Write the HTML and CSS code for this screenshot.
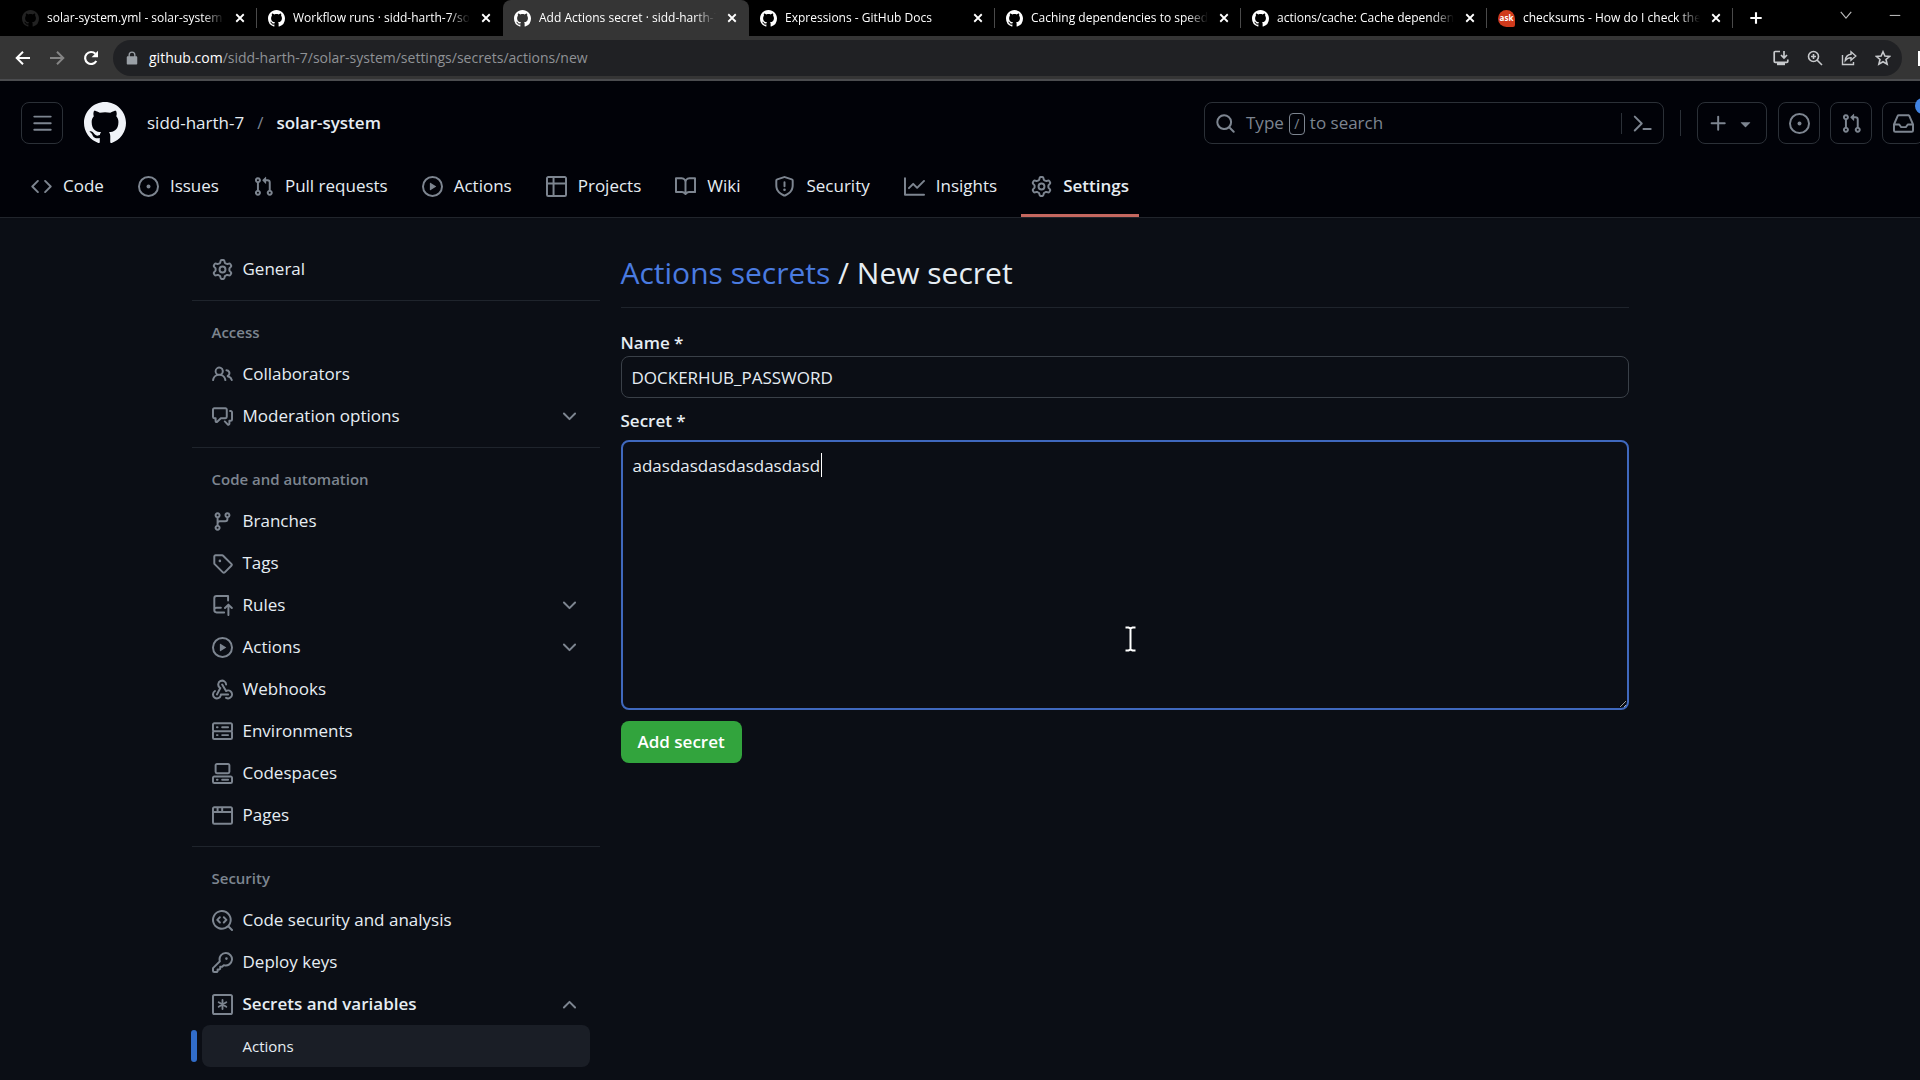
FILE: index.html
```html
<!DOCTYPE html>
<html lang="en">
<head>
    <meta charset="UTF-8">
    <meta name="viewport" content="width=device-width, initial-scale=1.0">
    <title>Add Actions secret · sidd-harth-7/solar-system</title>
    <link rel="stylesheet" href="styles.css">
</head>
<body>
    <!-- icon sprite -->
    <svg class="sprite" aria-hidden="true">
        <symbol id="i-bars" viewBox="0 0 16 16"><path d="M1 2.75A.75.75 0 0 1 1.75 2h12.5a.75.75 0 0 1 0 1.5H1.75A.75.75 0 0 1 1 2.75Zm0 5A.75.75 0 0 1 1.75 7h12.5a.75.75 0 0 1 0 1.5H1.75A.75.75 0 0 1 1 7.75ZM1.75 12h12.5a.75.75 0 0 1 0 1.5H1.75a.75.75 0 0 1 0-1.5Z"/></symbol>
        <symbol id="i-github" viewBox="0 0 16 16"><path d="M8 0c4.42 0 8 3.58 8 8a8.013 8.013 0 0 1-5.45 7.59c-.4.08-.55-.17-.55-.38 0-.27.01-1.13.01-2.2 0-.75-.25-1.23-.54-1.48 1.78-.2 3.65-.88 3.65-3.95 0-.88-.31-1.59-.82-2.15.08-.2.36-1.02-.08-2.12 0 0-.67-.22-2.2.82-.64-.18-1.32-.27-2-.27-.68 0-1.36.09-2 .27-1.53-1.03-2.2-.82-2.2-.82-.44 1.1-.16 1.92-.08 2.12-.51.56-.82 1.28-.82 2.15 0 3.06 1.86 3.75 3.64 3.95-.23.2-.44.55-.51 1.07-.46.21-1.61.55-2.33-.66-.15-.24-.6-.83-1.23-.82-.67.01-.27.38.01.53.34.19.73.9.82 1.13.16.45.68 1.31 2.69.94 0 .67.01 1.3.01 1.49 0 .21-.15.45-.55.38A7.995 7.995 0 0 1 0 8c0-4.42 3.58-8 8-8Z"/></symbol>
        <symbol id="i-code" viewBox="0 0 16 16"><path d="m11.28 3.22 4.25 4.25a.75.75 0 0 1 0 1.06l-4.25 4.25a.749.749 0 0 1-1.275-.326.749.749 0 0 1 .215-.734L13.94 8l-3.72-3.72a.749.749 0 0 1 .326-1.275.749.749 0 0 1 .734.215Zm-6.56 0a.751.751 0 0 1 1.042.018.751.751 0 0 1 .018 1.042L2.06 8l3.72 3.72a.749.749 0 0 1-.326 1.275.749.749 0 0 1-.734-.215L.47 8.53a.75.75 0 0 1 0-1.06Z"/></symbol>
        <symbol id="i-issue" viewBox="0 0 16 16"><path d="M8 9.5a1.5 1.5 0 1 0 0-3 1.5 1.5 0 0 0 0 3Z"/><path d="M8 0a8 8 0 1 1 0 16A8 8 0 0 1 8 0ZM1.5 8a6.5 6.5 0 1 0 13 0 6.5 6.5 0 0 0-13 0Z"/></symbol>
        <symbol id="i-pull" viewBox="0 0 16 16"><path d="M1.5 3.25a2.25 2.25 0 1 1 3 2.122v5.256a2.251 2.251 0 1 1-1.5 0V5.372A2.25 2.25 0 0 1 1.5 3.25Zm5.677-.177L9.573.677A.25.25 0 0 1 10 .854V2.5h1A2.5 2.5 0 0 1 13.5 5v5.628a2.251 2.251 0 1 1-1.5 0V5a1 1 0 0 0-1-1h-1v1.646a.25.25 0 0 1-.427.177L7.177 3.427a.25.25 0 0 1 0-.354ZM3.75 2.5a.75.75 0 1 0 0 1.5.75.75 0 0 0 0-1.5Zm0 9.5a.75.75 0 1 0 0 1.5.75.75 0 0 0 0-1.5Zm8.25.75a.75.75 0 1 0 1.5 0 .75.75 0 0 0-1.5 0Z"/></symbol>
        <symbol id="i-play" viewBox="0 0 16 16"><path d="M8 0a8 8 0 1 1 0 16A8 8 0 0 1 8 0ZM1.5 8a6.5 6.5 0 1 0 13 0 6.5 6.5 0 0 0-13 0Zm4.879-2.773 4.264 2.559a.25.25 0 0 1 0 .428l-4.264 2.559A.25.25 0 0 1 6 10.559V5.442a.25.25 0 0 1 .379-.215Z"/></symbol>
        <symbol id="i-table" viewBox="0 0 16 16"><path d="M0 1.75C0 .784.784 0 1.75 0h12.5C15.216 0 16 .784 16 1.75v12.5A1.75 1.75 0 0 1 14.25 16H1.75A1.75 1.75 0 0 1 0 14.25ZM6.5 6.5v8h7.75a.25.25 0 0 0 .25-.25V6.5Zm8-1.5V1.75a.25.25 0 0 0-.25-.25H6.5V5Zm-13 1.5v7.75c0 .138.112.25.25.25H5v-8ZM5 5V1.5H1.75a.25.25 0 0 0-.25.25V5Z"/></symbol>
        <symbol id="i-book" viewBox="0 0 16 16"><path d="M0 1.75A.75.75 0 0 1 .75 1h4.253c1.227 0 2.317.59 3 1.501A3.743 3.743 0 0 1 11.006 1h4.245a.75.75 0 0 1 .75.75v10.5a.75.75 0 0 1-.75.75h-4.507a2.25 2.25 0 0 0-1.591.659l-.622.621a.75.75 0 0 1-1.06 0l-.622-.621A2.25 2.25 0 0 0 5.258 13H.75a.75.75 0 0 1-.75-.75Zm7.251 10.324.004-5.073-.002-2.253A2.25 2.25 0 0 0 5.003 2.5H1.5v9h3.757a3.75 3.75 0 0 1 1.994.574ZM8.755 4.75l-.004 7.322a3.752 3.752 0 0 1 1.992-.572H14.5v-9h-3.495a2.25 2.25 0 0 0-2.25 2.25Z"/></symbol>
        <symbol id="i-shield" viewBox="0 0 16 16"><path d="M7.467.133a1.748 1.748 0 0 1 1.066 0l5.25 1.68A1.75 1.75 0 0 1 15 3.48V7c0 1.566-.32 3.182-1.303 4.682-.983 1.498-2.585 2.813-5.032 3.855a1.697 1.697 0 0 1-1.33 0c-2.447-1.042-4.049-2.357-5.032-3.855C1.32 10.182 1 8.566 1 7V3.48a1.75 1.75 0 0 1 1.217-1.667Zm.61 1.429a.25.25 0 0 0-.153 0l-5.25 1.68a.25.25 0 0 0-.174.238V7c0 1.358.275 2.666 1.057 3.86.784 1.194 2.121 2.34 4.366 3.297a.196.196 0 0 0 .154 0c2.245-.956 3.582-2.104 4.366-3.298C13.225 9.666 13.5 8.36 13.5 7V3.48a.251.251 0 0 0-.174-.237l-5.25-1.68ZM8.75 4.75v3a.75.75 0 0 1-1.5 0v-3a.75.75 0 0 1 1.5 0ZM9 10.5a1 1 0 1 1-2 0 1 1 0 0 1 2 0Z"/></symbol>
        <symbol id="i-graph" viewBox="0 0 16 16"><path d="M1.5 1.75V13.5h13.75a.75.75 0 0 1 0 1.5H.75a.75.75 0 0 1-.75-.75V1.75a.75.75 0 0 1 1.5 0Zm14.28 2.53-5.25 5.25a.75.75 0 0 1-1.06 0L7 7.06 4.28 9.78a.751.751 0 0 1-1.042-.018.751.751 0 0 1-.018-1.042l3.25-3.25a.75.75 0 0 1 1.06 0L10 7.94l4.72-4.72a.751.751 0 0 1 1.042.018.751.751 0 0 1 .018 1.042Z"/></symbol>
        <symbol id="i-gear" viewBox="0 0 16 16"><path d="M8 0a8.2 8.2 0 0 1 .701.031C9.444.095 9.99.645 10.16 1.29l.288 1.107c.018.066.079.158.212.224.231.114.454.243.668.386.123.082.233.09.299.071l1.103-.303c.644-.176 1.392.021 1.82.63.27.385.506.792.704 1.218.315.675.111 1.422-.364 1.891l-.814.806c-.049.048-.098.147-.088.294.016.257.016.515 0 .772-.01.147.038.246.088.294l.814.806c.475.469.679 1.216.364 1.891a7.977 7.977 0 0 1-.704 1.217c-.428.61-1.176.807-1.82.63l-1.102-.302c-.067-.019-.177-.011-.3.071a5.909 5.909 0 0 1-.668.386c-.133.066-.194.158-.211.224l-.29 1.106c-.168.646-.715 1.196-1.458 1.26a8.006 8.006 0 0 1-1.402 0c-.743-.064-1.289-.614-1.458-1.26l-.289-1.106c-.018-.066-.079-.158-.212-.224a5.738 5.738 0 0 1-.668-.386c-.123-.082-.233-.09-.299-.071l-1.103.303c-.644.176-1.392-.021-1.82-.63a8.12 8.12 0 0 1-.704-1.218c-.315-.675-.111-1.422.363-1.891l.815-.806c.05-.048.098-.147.088-.294a6.214 6.214 0 0 1 0-.772c.01-.147-.038-.246-.088-.294l-.815-.806C.635 6.045.431 5.298.746 4.623a7.92 7.92 0 0 1 .704-1.217c.428-.61 1.176-.807 1.82-.63l1.102.302c.067.019.177.011.3-.071.214-.143.437-.272.668-.386.133-.066.194-.158.211-.224l.29-1.106C6.009.645 6.556.095 7.299.03 7.53.01 7.764 0 8 0Zm-.571 1.525c-.036.003-.108.036-.137.146l-.289 1.105c-.147.561-.549.967-.998 1.189-.173.086-.34.183-.5.29-.417.278-.97.423-1.529.27l-1.103-.303c-.109-.03-.175.016-.195.045-.22.312-.412.644-.573.99-.014.031-.021.11.059.19l.815.806c.411.406.562.957.53 1.456a4.709 4.709 0 0 0 0 .582c.032.499-.119 1.05-.53 1.456l-.815.806c-.081.08-.073.159-.059.19.162.346.353.677.573.989.02.03.085.076.195.046l1.102-.303c.56-.153 1.113-.008 1.53.27.161.107.328.204.501.29.447.222.85.629.997 1.189l.289 1.105c.029.109.101.143.137.146a6.6 6.6 0 0 0 1.142 0c.036-.003.108-.036.137-.146l.289-1.105c.147-.561.549-.967.998-1.189.173-.086.34-.183.5-.29.417-.278.97-.423 1.529-.27l1.103.303c.109.029.175-.016.195-.045.22-.313.411-.644.573-.99.014-.031.021-.11-.059-.19l-.815-.806c-.411-.406-.562-.957-.53-1.456a4.709 4.709 0 0 0 0-.582c-.032-.499.119-1.05.53-1.456l.815-.806c.081-.08.073-.159.059-.19a6.464 6.464 0 0 0-.573-.989c-.02-.03-.085-.076-.195-.046l-1.102.303c-.56.153-1.113.008-1.53-.27a4.44 4.44 0 0 0-.501-.29c-.447-.222-.85-.629-.997-1.189l-.289-1.105c-.029-.11-.101-.143-.137-.146a6.6 6.6 0 0 0-1.142 0ZM11 8a3 3 0 1 1-6 0 3 3 0 0 1 6 0ZM9.5 8a1.5 1.5 0 1 0-3.001.001A1.5 1.5 0 0 0 9.5 8Z"/></symbol>
        <symbol id="i-people" viewBox="0 0 16 16"><path d="M2 5.5a3.5 3.5 0 1 1 5.898 2.549 5.508 5.508 0 0 1 3.034 4.084.75.75 0 1 1-1.482.235 4 4 0 0 0-7.9 0 .75.75 0 0 1-1.482-.236A5.507 5.507 0 0 1 3.102 8.05 3.493 3.493 0 0 1 2 5.5ZM11 4a3.001 3.001 0 0 1 2.22 5.018 5.01 5.01 0 0 1 2.56 3.012.749.749 0 0 1-.885.954.752.752 0 0 1-.549-.514 3.507 3.507 0 0 0-2.522-2.372.75.75 0 0 1-.574-.73v-.352a.75.75 0 0 1 .416-.672A1.5 1.5 0 0 0 11 5.5.75.75 0 0 1 11 4Zm-5.5-.5a2 2 0 1 0-.001 3.999A2 2 0 0 0 5.5 3.5Z"/></symbol>
        <symbol id="i-discussion" viewBox="0 0 16 16"><path d="M1.75 1h8.5c.966 0 1.75.784 1.75 1.75v5.5A1.75 1.75 0 0 1 10.25 10H7.061l-2.574 2.573A1.458 1.458 0 0 1 2 11.543V10h-.25A1.75 1.75 0 0 1 0 8.25v-5.5C0 1.784.784 1 1.75 1ZM1.5 2.75v5.5c0 .138.112.25.25.25h1a.75.75 0 0 1 .75.75v2.19l2.72-2.72a.749.749 0 0 1 .53-.22h3.5a.25.25 0 0 0 .25-.25v-5.5a.25.25 0 0 0-.25-.25h-8.5a.25.25 0 0 0-.25.25Zm13 2a.25.25 0 0 0-.25-.25h-.5a.75.75 0 0 1 0-1.5h.5c.966 0 1.75.784 1.75 1.75v5.5A1.75 1.75 0 0 1 14.25 12H14v1.543a1.458 1.458 0 0 1-2.487 1.03L9.22 12.28a.749.749 0 0 1 .326-1.275.749.749 0 0 1 .734.215l2.22 2.22v-2.19a.75.75 0 0 1 .75-.75h1a.25.25 0 0 0 .25-.25Z"/></symbol>
        <symbol id="i-branch" viewBox="0 0 16 16"><path d="M9.5 3.25a2.25 2.25 0 1 1 3 2.122V6A2.5 2.5 0 0 1 10 8.5H6a1 1 0 0 0-1 1v1.128a2.251 2.251 0 1 1-1.5 0V5.372a2.25 2.25 0 1 1 1.5 0v1.836A2.493 2.493 0 0 1 6 7h4a1 1 0 0 0 1-1v-.628A2.25 2.25 0 0 1 9.5 3.25Zm-6 0a.75.75 0 1 0 1.5 0 .75.75 0 0 0-1.5 0Zm8.25-.75a.75.75 0 1 0 0 1.5.75.75 0 0 0 0-1.5ZM4.25 12a.75.75 0 1 0 0 1.5.75.75 0 0 0 0-1.5Z"/></symbol>
        <symbol id="i-tag" viewBox="0 0 16 16"><path d="M1 7.775V2.75C1 1.784 1.784 1 2.75 1h5.025c.464 0 .91.184 1.238.513l6.25 6.25a1.75 1.75 0 0 1 0 2.474l-5.026 5.026a1.75 1.75 0 0 1-2.474 0l-6.25-6.25A1.752 1.752 0 0 1 1 7.775Zm1.5 0c0 .066.026.13.073.177l6.25 6.25a.25.25 0 0 0 .354 0l5.025-5.025a.25.25 0 0 0 0-.354l-6.25-6.25a.25.25 0 0 0-.177-.073H2.75a.25.25 0 0 0-.25.25ZM6 5a1 1 0 1 1 0 2 1 1 0 0 1 0-2Z"/></symbol>
        <symbol id="i-rules" viewBox="0 0 16 16"><path d="M1 2.5A2.5 2.5 0 0 1 3.5 0h8.75a.75.75 0 0 1 .75.75v3.5a.75.75 0 0 1-1.5 0V1.5h-8a1 1 0 0 0-1 1v6.708A2.493 2.493 0 0 1 3.5 9h3.25a.75.75 0 0 1 0 1.5H3.5a1 1 0 0 0 0 2h5.75a.75.75 0 0 1 0 1.5H3.5A2.5 2.5 0 0 1 1 11.5Z"/><path d="M12.5 15.3V8M9.9 9.9l2.6-2.6 2.6 2.6" fill="none" stroke="currentColor" stroke-width="1.5" stroke-linecap="round" stroke-linejoin="round"/></symbol>
        <symbol id="i-webhook" viewBox="0 0 16 16"><path d="M5.5 4.25a2.25 2.25 0 0 1 4.5 0 .75.75 0 0 0 1.5 0 3.75 3.75 0 1 0-6.14 2.889l-2.272 4.258a.75.75 0 0 0 1.324.706L7 7.25a.75.75 0 0 0-.309-1.015A2.25 2.25 0 0 1 5.5 4.25Z"/><path d="M7.364 3.607a.75.75 0 0 1 1.03.257l2.608 4.349a3.75 3.75 0 1 1-.628 6.785.75.75 0 0 1 .752-1.299 2.25 2.25 0 1 0-.033-3.88.75.75 0 0 1-1.03-.256L7.107 4.636a.75.75 0 0 1 .257-1.03Z"/><path d="M2.9 8.776A.75.75 0 0 1 2.625 9.8 2.25 2.25 0 1 0 6 11.75a.75.75 0 0 1 .75-.751h5.5a.75.75 0 0 1 0 1.5H7.425a3.751 3.751 0 1 1-5.55-3.998.75.75 0 0 1 1.024.274Z"/></symbol>
        <symbol id="i-server" viewBox="0 0 16 16"><path d="M1.75 1h12.5c.966 0 1.75.784 1.75 1.75v4c0 .372-.116.717-.314 1 .198.283.314.628.314 1v4a1.75 1.75 0 0 1-1.75 1.75H1.75A1.75 1.75 0 0 1 0 12.75v-4c0-.358.109-.707.314-1a1.739 1.739 0 0 1-.314-1v-4C0 1.784.784 1 1.75 1ZM1.5 2.75v4c0 .138.112.25.25.25h12.5a.25.25 0 0 0 .25-.25v-4a.25.25 0 0 0-.25-.25H1.75a.25.25 0 0 0-.25.25Zm.25 5.75a.25.25 0 0 0-.25.25v4c0 .138.112.25.25.25h12.5a.25.25 0 0 0 .25-.25v-4a.25.25 0 0 0-.25-.25ZM7 4.75A.75.75 0 0 1 7.75 4h4.5a.75.75 0 0 1 0 1.5h-4.5A.75.75 0 0 1 7 4.75ZM7.75 10h4.5a.75.75 0 0 1 0 1.5h-4.5a.75.75 0 0 1 0-1.5ZM3 4.75A.75.75 0 0 1 3.75 4h.5a.75.75 0 0 1 0 1.5h-.5A.75.75 0 0 1 3 4.75ZM3.75 10h.5a.75.75 0 0 1 0 1.5h-.5a.75.75 0 0 1 0-1.5Z"/></symbol>
        <symbol id="i-codespaces" viewBox="0 0 16 16"><path d="M0 11.25c0-.966.784-1.75 1.75-1.75h12.5c.966 0 1.75.784 1.75 1.75v3A1.75 1.75 0 0 1 14.25 16H1.75A1.75 1.75 0 0 1 0 14.25Zm2-9.5C2 .784 2.784 0 3.75 0h8.5C13.216 0 14 .784 14 1.75v5a1.75 1.75 0 0 1-1.75 1.75h-8.5A1.75 1.75 0 0 1 2 6.75Zm1.75-.25a.25.25 0 0 0-.25.25v5c0 .138.112.25.25.25h8.5a.25.25 0 0 0 .25-.25v-5a.25.25 0 0 0-.25-.25Zm-2 9.5a.25.25 0 0 0-.25.25v3c0 .138.112.25.25.25h12.5a.25.25 0 0 0 .25-.25v-3a.25.25 0 0 0-.25-.25Z"/><path d="M7 12.75a.75.75 0 0 1 .75-.75h4.5a.75.75 0 0 1 0 1.5h-4.5a.75.75 0 0 1-.75-.75Zm-4 0a.75.75 0 0 1 .75-.75h.5a.75.75 0 0 1 0 1.5h-.5a.75.75 0 0 1-.75-.75Z"/></symbol>
        <symbol id="i-browser" viewBox="0 0 16 16"><path d="M0 2.75C0 1.784.784 1 1.75 1h12.5c.966 0 1.75.784 1.75 1.75v10.5A1.75 1.75 0 0 1 14.25 15H1.75A1.75 1.75 0 0 1 0 13.25ZM14.5 6h-13v7.25c0 .138.112.25.25.25h12.5a.25.25 0 0 0 .25-.25Zm-6-3.5v2h6V2.75a.25.25 0 0 0-.25-.25ZM5 2.5v2h2v-2Zm-3.25 0a.25.25 0 0 0-.25.25V4.5h2v-2Z"/></symbol>
        <symbol id="i-codescan" viewBox="0 0 16 16"><path d="M8.47 4.97a.75.75 0 0 0 0 1.06L9.94 7.5 8.47 8.97a.75.75 0 1 0 1.06 1.06l2-2a.75.75 0 0 0 0-1.06l-2-2a.75.75 0 0 0-1.06 0ZM6.53 6.03a.75.75 0 0 0-1.06-1.06l-2 2a.75.75 0 0 0 0 1.06l2 2a.75.75 0 1 0 1.06-1.06L5.06 7.5l1.47-1.47Z"/><path d="M12.246 13.307a7.501 7.501 0 1 1 1.06-1.06l2.474 2.473a.749.749 0 1 1-1.06 1.06ZM1.5 7.5a6.002 6.002 0 0 0 3.608 5.504 6.002 6.002 0 0 0 6.486-1.117.748.748 0 0 1 .292-.293A6 6 0 1 0 1.5 7.5Z"/></symbol>
        <symbol id="i-key" viewBox="0 0 16 16"><path d="M10.5 0a5.499 5.499 0 1 1-1.288 10.848l-.932.932a.749.749 0 0 1-.53.22H7v.75a.749.749 0 0 1-.22.53l-.5.5a.749.749 0 0 1-.53.22H5v.75a.749.749 0 0 1-.22.53l-.5.5a.749.749 0 0 1-.53.22h-2A1.75 1.75 0 0 1 0 14.25v-2c0-.199.079-.389.22-.53l4.932-4.932A5.5 5.5 0 0 1 10.5 0Zm-4 5.5c-.001.431.069.86.205 1.269a.75.75 0 0 1-.181.768L1.5 12.56v1.69c0 .138.112.25.25.25h1.69l.06-.06v-1.19a.75.75 0 0 1 .75-.75h1.19l.06-.06v-1.19a.75.75 0 0 1 .75-.75h1.19l1.023-1.025a.75.75 0 0 1 .768-.18A4 4 0 1 0 6.5 5.5ZM11 6a1 1 0 1 1 0-2 1 1 0 0 1 0 2Z"/></symbol>
        <symbol id="i-asterisk" viewBox="0 0 16 16"><rect x=".75" y=".75" width="14.5" height="14.5" rx="1.2" fill="none" stroke="currentColor" stroke-width="1.5"/><path d="M8 4.6v6.8M5.1 6.3l5.8 3.4M10.9 6.3 5.1 9.7" stroke="currentColor" stroke-width="1.4" stroke-linecap="round"/></symbol>
        <symbol id="i-inbox" viewBox="0 0 16 16"><path d="M2.8 2.06A1.75 1.75 0 0 1 4.41 1h7.18c.7 0 1.333.417 1.61 1.06l2.74 6.395c.04.093.06.194.06.295v4.5A1.75 1.75 0 0 1 14.25 15H1.75A1.75 1.75 0 0 1 0 13.25v-4.5c0-.101.02-.202.06-.295Zm1.61.44a.25.25 0 0 0-.23.152L1.887 8H4.75a.75.75 0 0 1 .6.3L6.625 10h2.75l1.275-1.7a.75.75 0 0 1 .6-.3h2.863L11.82 2.652a.25.25 0 0 0-.23-.152Zm10.09 7h-2.875l-1.275 1.7a.75.75 0 0 1-.6.3h-3.5a.75.75 0 0 1-.6-.3L4.375 9.5H1.5v3.75c0 .138.112.25.25.25h12.5a.25.25 0 0 0 .25-.25Z"/></symbol>
        <symbol id="i-search" viewBox="0 0 16 16"><path d="M10.68 11.74a6 6 0 0 1-7.922-8.982 6 6 0 0 1 8.982 7.922l3.04 3.04a.749.749 0 0 1-.326 1.275.749.749 0 0 1-.734-.215ZM11.5 7a4.499 4.499 0 1 0-8.997 0A4.499 4.499 0 0 0 11.5 7Z"/></symbol>
        <symbol id="i-palette" viewBox="0 0 16 16"><path d="m6.354 8.04-4.773 4.773a.75.75 0 1 0 1.061 1.06L7.945 8.57a.75.75 0 0 0 0-1.06L2.642 2.206a.75.75 0 0 0-1.06 1.061L6.353 8.04ZM8.75 11.5a.75.75 0 0 0 0 1.5h5.5a.75.75 0 0 0 0-1.5h-5.5Z"/></symbol>
        <symbol id="i-plus" viewBox="0 0 16 16"><path d="M7.75 2a.75.75 0 0 1 .75.75V7h4.25a.75.75 0 0 1 0 1.5H8.5v4.25a.75.75 0 0 1-1.5 0V8.5H2.75a.75.75 0 0 1 0-1.5H7V2.75A.75.75 0 0 1 7.75 2Z"/></symbol>
        <symbol id="i-caret" viewBox="0 0 16 16"><path d="m4.427 7.427 3.396 3.396a.25.25 0 0 0 .354 0l3.396-3.396A.25.25 0 0 0 11.396 7H4.604a.25.25 0 0 0-.177.427Z"/></symbol>
        <symbol id="i-chevron" viewBox="0 0 16 16"><path d="M12.78 5.22a.749.749 0 0 1 0 1.06l-4.25 4.25a.749.749 0 0 1-1.06 0L3.22 6.28a.749.749 0 1 1 1.06-1.06L8 8.939l3.72-3.719a.749.749 0 0 1 1.06 0Z"/></symbol>
        <symbol id="i-close" viewBox="0 0 16 16"><path d="M3 3l10 10M13 3 3 13" stroke="currentColor" stroke-width="2.4"/></symbol>
    </svg>

    <div class="tabs">
        <div class="tab">
            <svg class="favicon dim"><use href="#i-github"/></svg>
            <a class="tab-title" href="#">solar-system.yml - solar-system [main]</a>
            <button class="tab-close" aria-label="Close tab"><svg><use href="#i-close"/></svg></button>
        </div>
        <div class="tab no-line">
            <svg class="favicon"><use href="#i-github"/></svg>
            <a class="tab-title" href="#">Workflow runs · sidd-harth-7/solar</a>
            <button class="tab-close" aria-label="Close tab"><svg><use href="#i-close"/></svg></button>
        </div>
        <div class="tab active">
            <svg class="favicon"><use href="#i-github"/></svg>
            <a class="tab-title" href="#">Add Actions secret · sidd-harth-7/solar</a>
            <button class="tab-close" aria-label="Close tab"><svg><use href="#i-close"/></svg></button>
        </div>
        <div class="tab">
            <svg class="favicon"><use href="#i-github"/></svg>
            <a class="tab-title" href="#">Expressions - GitHub Docs</a>
            <button class="tab-close" aria-label="Close tab"><svg><use href="#i-close"/></svg></button>
        </div>
        <div class="tab">
            <svg class="favicon"><use href="#i-github"/></svg>
            <a class="tab-title" href="#">Caching dependencies to speed up</a>
            <button class="tab-close" aria-label="Close tab"><svg><use href="#i-close"/></svg></button>
        </div>
        <div class="tab">
            <svg class="favicon"><use href="#i-github"/></svg>
            <a class="tab-title" href="#">actions/cache: Cache dependencies</a>
            <button class="tab-close" aria-label="Close tab"><svg><use href="#i-close"/></svg></button>
        </div>
        <div class="tab">
            <span class="favicon ask">ask</span>
            <a class="tab-title" href="#">checksums - How do I check the</a>
            <button class="tab-close" aria-label="Close tab"><svg><use href="#i-close"/></svg></button>
        </div>
        <button class="new-tab" aria-label="New tab"><svg viewBox="0 0 16 16"><path d="M8 1.5v13M1.5 8h13" stroke="currentColor" stroke-width="2.4"/></svg></button>
        <div class="window-buttons">
            <button aria-label="Search tabs"><svg viewBox="0 0 16 16"><path d="m2 4.500 6 7 6-7" fill="none" stroke="currentColor" stroke-width="1.3"/></svg></button>
            <button aria-label="Minimize"><svg viewBox="0 0 16 16"><path d="M2 8.500h12" stroke="currentColor" stroke-width="1.2"/></svg></button>
        </div>
    </div>

    <div class="toolbar">
        <button aria-label="Back"><svg viewBox="0 0 16 16"><path d="M15 8H2M8 1.700 1.700 8 8 14.300" fill="none" stroke="currentColor" stroke-width="2"/></svg></button>
        <button class="dim" aria-label="Forward"><svg viewBox="0 0 16 16"><path d="M1 8h13M8 1.700 14.300 8 8 14.300" fill="none" stroke="currentColor" stroke-width="2"/></svg></button>
        <button aria-label="Reload"><svg viewBox="0 0 16 16"><path d="M13.300 11A6 6 0 1 1 12.400 3.800" fill="none" stroke="currentColor" stroke-width="2.200"/><path d="M15 .8v6.400H8.600Z"/></svg></button>
        <div class="address">
            <svg class="lock" viewBox="0 0 16 16"><path d="M4 6V4.500a4 4 0 0 1 8 0V6h.8c.7 0 1.200.5 1.200 1.200v7c0 .7-.5 1.200-1.200 1.200H3.200c-.7 0-1.200-.5-1.200-1.200v-7C2 6.500 2.500 6 3.200 6Zm1.500 0h5V4.500a2.500 2.500 0 0 0-5 0Z"/></svg>
            <label for="url">github.com</label>
            <input id="url" type="text" value="/sidd-harth-7/solar-system/settings/secrets/actions/new">
            <button aria-label="Install"><svg viewBox="0 0 16 16"><path d="M7 1.500H2.200a1 1 0 0 0-1 1v8.800a1 1 0 0 0 1 1h11.600a1 1 0 0 0 1-1V9.500M11 1v6.500M8 5l3 3 3-3" fill="none" stroke="currentColor" stroke-width="1.700"/><path d="M4 12h8v3.200H4Z"/></svg></button>
            <button aria-label="Zoom"><svg viewBox="0 0 16 16"><circle cx="6.500" cy="6.500" r="5" fill="none" stroke="currentColor" stroke-width="1.600"/><path d="m10 10 5 5M6.500 4v5M4 6.500h5" stroke="currentColor" stroke-width="1.600"/></svg></button>
            <button aria-label="Share"><svg viewBox="0 0 16 16"><path d="M1.500 5v9.500h11V12M10 1.800 14.800 6 10 10.200V7.800C7.500 7.800 5.800 8.600 4.300 10.500 4.600 7.200 6.500 4.700 10 4.300Z" fill="none" stroke="currentColor" stroke-width="1.400"/></svg></button>
            <button aria-label="Bookmark"><svg viewBox="0 0 16 16"><path d="m8 1.800 1.900 4.300 4.600.4-3.500 3 1.100 4.600L8 11.700l-4.100 2.400L5 9.500l-3.500-3 4.600-.4Z" fill="none" stroke="currentColor" stroke-width="1.600"/></svg></button>
        </div>
        <span class="extension"></span>
    </div>

    <header>
        <div class="header-top">
            <button class="box" aria-label="Open menu"><svg class="icon"><use href="#i-bars"/></svg></button>
            <a class="logo" href="#" aria-label="GitHub"><svg><use href="#i-github"/></svg></a>
            <div class="crumbs">
                <a href="#">sidd-harth-7</a>
                <span>/</span>
                <a class="bold" href="#">solar-system</a>
            </div>
            <button class="search">
                <svg class="icon"><use href="#i-search"/></svg>
                <span class="search-text">Type <kbd>/</kbd> to search</span>
                <span class="palette"><svg class="icon"><use href="#i-palette"/></svg></span>
            </button>
            <span class="split"></span>
            <div class="actions">
                <button class="box create" aria-label="Create new"><svg class="icon"><use href="#i-plus"/></svg><svg class="icon"><use href="#i-caret"/></svg></button>
                <button class="box" aria-label="Issues"><svg class="icon"><use href="#i-issue"/></svg></button>
                <button class="box" aria-label="Pull requests"><svg class="icon"><use href="#i-pull"/></svg></button>
                <button class="box inbox" aria-label="Notifications"><svg class="icon"><use href="#i-inbox"/></svg><span class="dot"></span></button>
            </div>
        </div>
        <nav class="repo-nav">
            <a href="#"><svg class="icon"><use href="#i-code"/></svg>Code</a>
            <a href="#"><svg class="icon"><use href="#i-issue"/></svg>Issues</a>
            <a href="#"><svg class="icon"><use href="#i-pull"/></svg>Pull requests</a>
            <a href="#"><svg class="icon"><use href="#i-play"/></svg>Actions</a>
            <a href="#"><svg class="icon"><use href="#i-table"/></svg>Projects</a>
            <a href="#"><svg class="icon"><use href="#i-book"/></svg>Wiki</a>
            <a href="#"><svg class="icon"><use href="#i-shield"/></svg>Security</a>
            <a href="#"><svg class="icon"><use href="#i-graph"/></svg>Insights</a>
            <a class="selected" href="#"><svg class="icon"><use href="#i-gear"/></svg>Settings</a>
        </nav>
    </header>

    <main>
        <nav class="sidebar">
            <a href="#"><svg class="icon"><use href="#i-gear"/></svg>General</a>
            <hr>
            <h2>Access</h2>
            <a href="#"><svg class="icon"><use href="#i-people"/></svg>Collaborators</a>
            <button><svg class="icon"><use href="#i-discussion"/></svg>Moderation options<svg class="icon chevron"><use href="#i-chevron"/></svg></button>
            <hr>
            <h2>Code and automation</h2>
            <a href="#"><svg class="icon"><use href="#i-branch"/></svg>Branches</a>
            <a href="#"><svg class="icon"><use href="#i-tag"/></svg>Tags</a>
            <button><svg class="icon"><use href="#i-rules"/></svg>Rules<svg class="icon chevron"><use href="#i-chevron"/></svg></button>
            <button><svg class="icon"><use href="#i-play"/></svg>Actions<svg class="icon chevron"><use href="#i-chevron"/></svg></button>
            <a href="#"><svg class="icon"><use href="#i-webhook"/></svg>Webhooks</a>
            <a href="#"><svg class="icon"><use href="#i-server"/></svg>Environments</a>
            <a href="#"><svg class="icon"><use href="#i-codespaces"/></svg>Codespaces</a>
            <a href="#"><svg class="icon"><use href="#i-browser"/></svg>Pages</a>
            <hr>
            <h2>Security</h2>
            <a href="#"><svg class="icon"><use href="#i-codescan"/></svg>Code security and analysis</a>
            <a href="#"><svg class="icon"><use href="#i-key"/></svg>Deploy keys</a>
            <button class="bold"><svg class="icon"><use href="#i-asterisk"/></svg>Secrets and variables<svg class="icon chevron up"><use href="#i-chevron"/></svg></button>
            <a class="sub current" href="#">Actions</a>
        </nav>

        <form class="content">
            <h1><a href="#">Actions secrets</a> / New secret</h1>
            <label for="name">Name *</label>
            <input id="name" type="text" value="DOCKERHUB_PASSWORD">
            <label class="secret-label" for="secret">Secret *</label>
            <div class="secret-box">
                <textarea id="secret" spellcheck="false">adasdasdasdasdasdasd</textarea>
                <span class="text-caret"></span>
                <svg class="pointer" viewBox="0 0 11 26"><path d="M.5 1.500h3l2 1 2-1h3M.5 24.500h3l2-1 2 1h3M5.500 2v22" fill="none" stroke="#fff" stroke-width="2"/></svg>
            </div>
            <button class="submit" type="button">Add secret</button>
        </form>
    </main>
</body>
</html>
```

FILE: styles.css
```css
* {
    box-sizing: border-box;
}

body {
    margin: 0;
    background: #0b0e15;
    color: #e6edf3;
    font-family: 'Open Sans', 'Noto Sans', sans-serif;
    font-size: 17px;
    line-height: 24px;
    height: 100vh;
    overflow: hidden;
}

a {
    color: inherit;
    text-decoration: none;
}

button {
    background: none;
    border: none;
    padding: 0;
    color: inherit;
    font: inherit;
    cursor: pointer;
}

svg {
    display: block;
    fill: currentColor;
}

.sprite {
    display: none;
}

.icon {
    width: 21px;
    height: 21px;
    flex: none;
    color: #7d8590;
}

.bold {
    font-weight: 600;
}

/* browser tabs */
.tabs {
    display: flex;
    height: 36px;
    padding-left: 11px;
    background: #000;
    color: #fff;
    font-size: 12px;
}

.tab {
    display: flex;
    align-items: center;
    width: 246px;
    padding: 0 9px 0 11px;
    position: relative;
}

/* thin line between two tabs */
.tab::after {
    content: '';
    position: absolute;
    right: 0;
    top: 8px;
    width: 1px;
    height: 20px;
    background: #4a4a4a;
}

.tab.active {
    background: #353535;
    border-radius: 8px 8px 0 0;
}

.tab.active::after,
.tab.no-line::after {
    display: none;
}

.favicon {
    width: 17px;
    height: 17px;
    flex: none;
}

.favicon.dim {
    color: #222;
}

.ask {
    background: #d03a1c;
    border-radius: 50% 50% 2px 50%;
    font-size: 8px;
    font-weight: 700;
    line-height: 16px;
    text-align: center;
}

.tab-title {
    flex: 1;
    margin: 0 8px;
    white-space: nowrap;
    overflow: hidden;
    mask-image: linear-gradient(90deg, #000 88%, transparent);
}

.tab-close svg {
    width: 12px;
    height: 12px;
    margin: 2px;
}

.new-tab {
    padding: 0 16px;
}

.new-tab svg {
    width: 14px;
    height: 14px;
}

.window-buttons {
    display: flex;
    gap: 35px;
    margin-left: auto;
    padding: 0 18px 6px 0;
    color: #bbb;
}

.window-buttons svg {
    width: 14px;
    height: 14px;
}

/* address bar */
.toolbar {
    display: flex;
    align-items: center;
    gap: 18px;
    height: 45px;
    padding: 1px 0 0 15px;
    background: #353535;
    border-bottom: 2px solid #4b4c4f;
    color: #fff;
}

.toolbar > button svg {
    width: 16px;
    height: 16px;
}

.toolbar .dim {
    color: #858585;
}

.address {
    display: flex;
    flex: 1;
    align-items: center;
    height: 36px;
    margin: 0 -2px 0 -4px;
    padding: 0 11px 0 12px;
    border-radius: 18px;
    background: #202124;
    font-size: 14px;
}

.address .lock {
    width: 14px;
    height: 14px;
    margin-right: 10px;
    color: #9aa0a6;
}

.address input {
    flex: 1;
    padding: 0;
    border: none;
    outline: none;
    background: none;
    color: #8f9296;
    font: inherit;
}

.address button {
    margin-left: 18px;
    color: #c7c9cc;
}

.address button svg {
    width: 16px;
    height: 16px;
}

.extension {
    width: 2px;
    height: 15px;
    background: #fff;
}

/* github header */
header {
    background: #010208;
    border-bottom: 1px solid #21252c;
}

.header-top {
    display: flex;
    align-items: center;
    padding: 21px 0 0 21px;
}

.box {
    display: flex;
    align-items: center;
    justify-content: center;
    width: 42px;
    height: 42px;
    border: 1px solid #2b3037;
    border-radius: 8px;
}

.logo svg {
    width: 42px;
    height: 42px;
    margin: 0 21px;
    color: #f0f3f8;
}

.crumbs {
    display: flex;
    gap: 13px;
}

.crumbs span {
    color: #7d8590;
}

.search {
    display: flex;
    align-items: center;
    width: 460px;
    height: 42px;
    margin-left: auto;
    padding: 0 10px;
    border: 1px solid #2b3037;
    border-radius: 8px;
    color: #7d8590;
}

.search-text {
    display: flex;
    gap: 5px;
    margin-left: 10px;
}

kbd {
    width: 16px;
    height: 22px;
    margin-top: 2px;
    border: 1px solid #7d8590;
    border-radius: 4px;
    font: inherit;
    font-size: 14px;
    line-height: 20px;
}

.palette {
    margin-left: auto;
    padding-left: 10px;
    border-left: 1px solid #2b3037;
}

.split {
    width: 1px;
    height: 26px;
    margin: 0 16px;
    background: #2b3037;
}

.actions {
    display: flex;
    gap: 10px;
    margin-right: -4px;
}

.create {
    width: 70px;
    gap: 6px;
    margin-right: 1px;
}

.inbox {
    position: relative;
}

.dot {
    position: absolute;
    top: -5px;
    right: -8px;
    width: 16px;
    height: 16px;
    border-radius: 50%;
    background: #4184e4;
}

.repo-nav {
    display: flex;
    gap: 14px;
    padding: 11px 21px 0;
}

.repo-nav a {
    display: flex;
    align-items: center;
    gap: 11px;
    height: 62px;
    padding: 0 10px;
}

.repo-nav .selected {
    border-bottom: 3px solid #c4675f;
    margin-bottom: -1px;
    padding-top: 3px;
    font-weight: 600;
}

main {
    display: flex;
    gap: 21px;
    max-width: 1437px;
    margin: 0 auto;
    padding-top: 30px;
    position: relative;
    right: 50px;
}

/* settings menu */
.sidebar {
    width: 408px;
    flex: none;
}

.sidebar hr {
    margin: 10px 0;
    border: none;
    border-top: 1px solid #1f242c;
}

.sidebar h2 {
    margin: 0;
    padding: 0 20px;
    color: #7d8590;
    font-size: 15px;
    font-weight: 600;
    line-height: 42px;
}

.sidebar a,
.sidebar button {
    display: flex;
    align-items: center;
    gap: 10px;
    width: 388px;
    height: 42px;
    margin-left: 10px;
    padding: 0 10px;
    border-radius: 8px;
}

.chevron {
    margin-left: auto;
}

.chevron.up {
    transform: rotate(180deg);
}

.sidebar .sub {
    padding-left: 41px;
    font-size: 15px;
}

.current {
    position: relative;
    background: #1a1e26;
}

.current::before {
    content: '';
    position: absolute;
    left: -11px;
    top: 5px;
    width: 6px;
    height: 32px;
    border-radius: 6px;
    background: #316dca;
}

/* new secret form */
.content {
    flex: 1;
}

.content h1 {
    margin: 0 0 23px;
    padding: 1px 0 10px;
    border-bottom: 1px solid #1f242c;
    font-size: 30px;
    font-weight: 400;
    line-height: 48px;
}

.content h1 a {
    color: #4a7be0;
}

.content label {
    display: block;
    font-weight: 600;
}

.content input,
.content textarea {
    display: block;
    width: 100%;
    border: 1px solid #3a4048;
    border-radius: 8px;
    outline: none;
    background: #0b0e15;
    color: inherit;
    font: inherit;
}

.content input {
    height: 42px;
    margin-top: 1px;
    padding: 0 10px;
}

.secret-label {
    margin: 11px 0 7px;
}

.secret-box {
    position: relative;
}

.content textarea {
    height: 270px;
    padding: 12px 10px;
    border: 2px solid #3f68bd;
    resize: vertical;
}

.text-caret {
    position: absolute;
    left: 200px;
    top: 13px;
    width: 1px;
    height: 24px;
    background: #fff;
}

.pointer {
    position: absolute;
    left: 504px;
    top: 186px;
    width: 11px;
    height: 26px;
}

.submit {
    height: 42px;
    margin-top: 11px;
    padding: 0 17px;
    border-radius: 8px;
    background: #32a43d;
    color: #fff;
    font-weight: 600;
}
```
